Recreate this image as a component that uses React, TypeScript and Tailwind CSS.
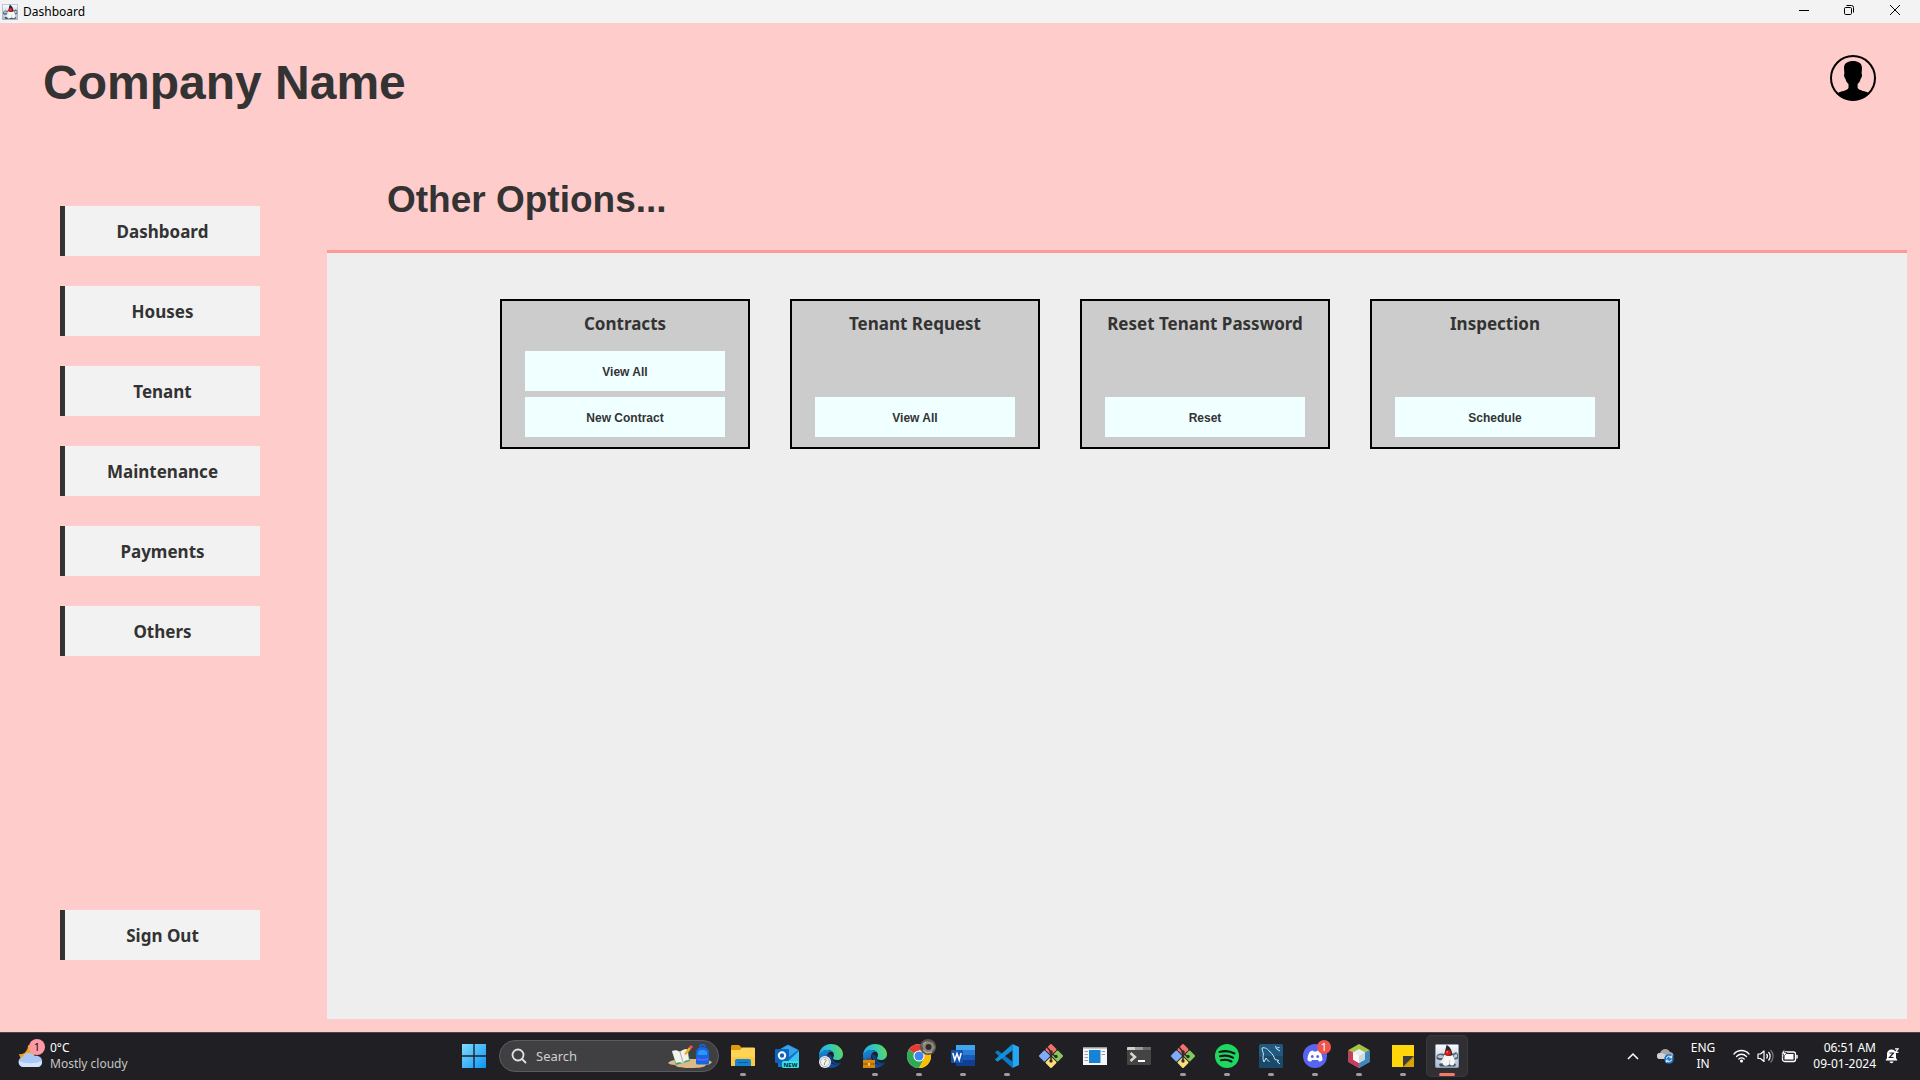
import React from "react";

const navItems = ["Dashboard", "Houses", "Tenant", "Maintenance", "Payments", "Others"];

const cards = [
  { title: "Contracts", actions: ["View All", "New Contract"] },
  { title: "Tenant Request", actions: ["View All"] },
  { title: "Reset Tenant Password", actions: ["Reset"] },
  { title: "Inspection", actions: ["Schedule"] },
];

function Duke({ className }: { className: string }) {
  return (
    <svg className={className} viewBox="0 0 24 24" aria-hidden="true">
      <defs>
        <linearGradient id="dukeSky" x1="0" y1="0" x2="0" y2="1">
          <stop offset="0" stopColor="#fbfcfe" />
          <stop offset="1" stopColor="#a9bad0" />
        </linearGradient>
      </defs>
      <rect x="0.5" y="0.5" width="23" height="23" rx="1" fill="url(#dukeSky)" stroke="#8ba0b8" />
      <path d="M1.500 12c2-3 6-3 9-1l-1 5c-3 1-6 0-8-1z" fill="#56616d" />
      <path d="M2.500 12c2-1.500 4-1.500 6 0l-1 2c-2 0-4 0-5-1z" fill="#b9c6d2" />
      <path d="M17 10l4-2 2 2v5l-5 1z" fill="#5f6b77" />
      <path d="M19 11l3-1v3l-3 1z" fill="#c3ced9" />
      <path d="M4 20c5-2 12-2 17 0l-1 2.500H5z" fill="#4c5660" />
      <path d="M11.500 1c3 1 5.500 5 6 10l-1 3h-6l-1.500-2c.5-4 2-8 2.500-11z" fill="#26262b" />
      <path d="M9.500 10.500c1 1.500 5.500 2 8 .5 2 3 3 7 1.500 9.500-1.500 1.500-3.500 1-4.500-.5-1.500 2-5 2.500-6.500.5C6.500 18 8 13 9.500 10.500z" fill="#f7f7f7" />
      <path d="M9 13l-4 5 1.500 1.500L10 16z" fill="#ececec" />
      <path d="M14.500 20c.3-2 .3-3 0-4" stroke="#b9bdc2" fill="none" />
      <circle cx="13" cy="8.800" r="2.900" fill="#e4161b" />
      <circle cx="12.200" cy="7.900" r="0.900" fill="#ff6d62" />
    </svg>
  );
}

function Avatar() {
  return (
    <svg className="size-[46px]" viewBox="0 0 46 46" aria-hidden="true">
      <defs>
        <clipPath id="avatarRing"><circle cx="23" cy="23" r="22.5" /></clipPath>
      </defs>
      <g clipPath="url(#avatarRing)">
        <path d="M14 13c0-5 4-7 9-7s9 2 9 7l-.4 5.500c1 1.500 0 4.500-1 5.500-.5 2-1.600 4-3 5v4c2 3 8 3 11 5l3 3-5 6H10l-5-6 3-3c3-2 9-2 10.500-5v-4c-1.500-1-2.500-3-3-5-1-1-2-4-1.100-5.500z" fill="#000" />
      </g>
      <circle cx="23" cy="23" r="22" fill="none" stroke="#000" strokeWidth="2" />
    </svg>
  );
}

function TitleBar() {
  return (
    <div className="flex h-[23px] shrink-0 items-center justify-between bg-[#f3f3f3]">
      <div className="flex items-center gap-[5px] pl-[2px]">
        <Duke className="size-4" />
        <span className="text-[12px] leading-4 text-black">Dashboard</span>
      </div>
      <div className="flex h-full pr-px pb-[3px]">
        <button aria-label="Minimize" className="flex w-[45px] items-center justify-center">
          <svg width="10" height="10" viewBox="0 0 10 10"><path d="M0 5.500h10" stroke="#000" /></svg>
        </button>
        <button aria-label="Restore" className="flex w-[45px] items-center justify-center">
          <svg width="10" height="10" viewBox="0 0 10 10" fill="none" stroke="#000">
            <rect x="0.5" y="2.500" width="7" height="7" rx="1.200" />
            <path d="M2.500 .5H7.500a2 2 0 0 1 2 2V7.500" />
          </svg>
        </button>
        <button aria-label="Close" className="flex w-12 items-center justify-center">
          <svg width="10" height="10" viewBox="0 0 10 10"><path d="M0 0l10 10M10 0L0 10" stroke="#000" /></svg>
        </button>
      </div>
    </div>
  );
}

function NavButton({ label }: { label: string }) {
  return (
    <button className="h-[50px] w-full border-l-[5px] border-[#333333] bg-[#f2f2f2] pt-[2px] text-center text-[17px] leading-6 font-bold text-[#333333]">
      {label}
    </button>
  );
}

function OptionCard({ title, actions }: { title: string; actions: string[] }) {
  return (
    <section className="flex h-[150px] w-[250px] flex-col justify-between border-2 border-black bg-[#cccccc] px-[23px] pt-[11px] pb-[10px]">
      <h2 className="text-center text-[17px] leading-6 font-bold whitespace-nowrap text-[#333333]">{title}</h2>
      <div className="flex flex-col gap-[6px]">
        {actions.map((a) => (
          <button key={a} className="h-10 w-full bg-[#f0ffff] pt-px font-['Liberation_Sans',sans-serif] text-[12px] font-bold text-[#333333]">
            {a}
          </button>
        ))}
      </div>
    </section>
  );
}

const icon = "size-6 overflow-visible";

function Edge({ id, children }: { id: string; children: React.ReactNode }) {
  return (
    <svg className={icon} viewBox="0 0 24 24">
      <defs>
        <linearGradient id={id + "a"} x1="0" y1="0.500" x2="1" y2="0.300">
          <stop offset="0" stopColor="#2ba9e6" />
          <stop offset="0.5" stopColor="#30c6c4" />
          <stop offset="1" stopColor="#62da50" />
        </linearGradient>
        <linearGradient id={id + "b"} x1="0" y1="0" x2="0.500" y2="1">
          <stop offset="0" stopColor="#1a8fdc" />
          <stop offset="1" stopColor="#0c4a9c" />
        </linearGradient>
      </defs>
      <path d="M0 12C0 5 5 0 12 0s12 5 12 10c0 4-3 6-6 6-3 0-4-1-4-2 0-.6 1-1 1-3 0-3-3-5-6.500-5C4 6 1 9 0 12z" fill={"url(#" + id + "a)"} />
      <path d="M0 12c1-4 4-6 8.500-6 2 0 4 1 5 2-3-1-5.500 1-5.500 5 0 5 4 7.500 8 7.500 3 0 5-1.500 6-2-2 3-5.500 5.500-10 5.500C5 24 0 19 0 12z" fill={"url(#" + id + "b)"} />
      <path d="M9.500 10c-1 4 1 9 6.500 10.500 3 .5 5.500-1 6.500-2-1 .2-2.500.8-4.500.3-3.500-1-5.500-4-4.500-6.800-1.500-.5-3-1.500-4-2z" fill="#123f7c" />
      {children}
    </svg>
  );
}

function Git() {
  return (
    <svg className={icon} viewBox="0 0 24 24">
      <g transform="rotate(45 12 12)">
        <rect x="3.200" y="3.200" width="8.300" height="8.300" rx="1" fill="#f3706d" />
        <rect x="12.500" y="3.200" width="8.300" height="8.300" rx="1" fill="#86c95a" />
        <rect x="3.200" y="12.500" width="8.300" height="8.300" rx="1" fill="#7fabf8" />
        <rect x="12.500" y="12.500" width="8.300" height="8.300" rx="1" fill="#fbe07a" />
      </g>
      <path d="M8 3l4 5v9M12 9l5 4" stroke="#332b2b" strokeWidth="1.500" fill="none" />
      <circle cx="12" cy="8" r="1.700" fill="#332b2b" />
      <circle cx="12" cy="17" r="1.700" fill="#332b2b" />
      <circle cx="17" cy="12.500" r="1.700" fill="#332b2b" />
    </svg>
  );
}

const apps: { name: string; open?: boolean; active?: boolean; art: React.ReactNode }[] = [
  {
    name: "File Explorer", open: true,
    art: (
      <svg className={icon} viewBox="0 0 24 24">
        <path d="M0 2.500C0 1.700.5 1 1.500 1H8l2.500 2.500V8H0z" fill="#e09b0c" />
        <path d="M0 6h9l2-2.500h11.500c1 0 1.500.5 1.500 1.500v17H0z" fill="#ffd354" />
        <path d="M0 13h24v9H0z" fill="#fbc02f" opacity="0.5" />
        <path d="M4 22v-5c0-1.500 1-2 2-2h12c1.200 0 2 .7 2 2v5z" fill="#1584cf" />
        <path d="M7 18.500h10" stroke="#0b5c9b" />
      </svg>
    ),
  },
  {
    name: "Outlook",
    art: (
      <svg className={icon} viewBox="0 0 24 24">
        <path d="M3 6l10-5.500L24 6v17H3z" fill="#1173c8" />
        <path d="M4 6l9-5 10 5-9 7z" fill="#39a3e6" />
        <path d="M24 7v14H9z" fill="#39c3f1" />
        <rect y="5" width="14" height="14" rx="1" fill="#0d66bd" />
        <circle cx="7" cy="11.500" r="3.200" fill="none" stroke="#fff" strokeWidth="2" />
        <rect x="7" y="17" width="17" height="7" rx="1.500" fill="#35e0e8" />
        <text x="15.500" y="22.800" fontSize="6" fontWeight="700" textAnchor="middle" fill="#06282e">NEW</text>
      </svg>
    ),
  },
  {
    name: "Edge",
    art: (
      <Edge id="edgeOne">
        <circle cx="6" cy="18" r="6" fill="#f1f1f1" />
        <circle cx="6" cy="18" r="4.500" fill="none" stroke="#b5b5b5" />
        <path d="M5 16c1-1.500 3-.5 2 1l-1.500 2v2" fill="none" stroke="#9a9a9a" />
      </Edge>
    ),
  },
  {
    name: "Edge Work", open: true,
    art: (
      <Edge id="edgeTwo">
        <path d="M4 16v-1.500h4V16" fill="none" stroke="#7a4305" />
        <rect y="16" width="12" height="8" fill="#d9860f" />
        <path d="M0 20h12" stroke="#8f5206" />
        <rect x="5" y="19" width="2" height="2.500" fill="#ffd071" />
      </Edge>
    ),
  },
  {
    name: "Chrome", open: true,
    art: (
      <svg className={icon} viewBox="0 0 24 24">
        <circle cx="12" cy="12" r="12" fill="#fff" />
        <path d="M12 12L1.600 6A12 12 0 0 1 22.400 6z" fill="#e33b2e" />
        <path d="M12 12L1.600 6A12 12 0 0 0 12 24l5-9z" fill="#2da94f" />
        <path d="M12 12l5 3-5 9A12 12 0 0 0 22.400 6H12z" fill="#fdbd00" />
        <circle cx="12" cy="12" r="5.600" fill="#fff" />
        <circle cx="12" cy="12" r="4.500" fill="#4184f3" />
        <circle cx="21" cy="3" r="8" fill="#5d5750" />
        <path d="M15 1l5-4 6 2 2 5-4 5-6 0z" fill="#8d867d" />
        <circle cx="21.500" cy="3" r="3" fill="#2e2c2b" />
        <path d="M16 6l4 3 5-1M16 0l3-2" stroke="#c4bdb2" fill="none" />
      </svg>
    ),
  },
  {
    name: "Word", open: true,
    art: (
      <svg className={icon} viewBox="0 0 24 24">
        <rect x="5" y="1" width="19" height="6" fill="#41a5ee" />
        <rect x="5" y="6" width="19" height="6" fill="#2b7cd3" />
        <rect x="5" y="11" width="19" height="6" fill="#185abd" />
        <rect x="5" y="16" width="19" height="6" fill="#103f91" />
        <rect y="6" width="12" height="13" rx="1" fill="#1553ae" />
        <path d="M1.800 9l2 7 2.200-6.500L8.200 16l2-7" fill="none" stroke="#fff" strokeWidth="1.500" />
      </svg>
    ),
  },
  {
    name: "Visual Studio Code", open: true,
    art: (
      <svg className={icon} viewBox="0 0 24 24">
        <path d="M17.500 0L24 3v18l-6.500 3z" fill="#28a6f0" />
        <path d="M17.500 24L0 8.500 2.500 6.300 18 18z" fill="#0a7bc6" />
        <path d="M17.500 0L0 15.500l2.500 2.200L18 6z" fill="#1390dc" />
      </svg>
    ),
  },
  { name: "Git Bash", art: <Git /> },
  {
    name: "Preview",
    art: (
      <svg className={icon} viewBox="0 0 24 24">
        <rect y="3" width="24" height="18" fill="#f6f6f6" />
        <rect y="3" width="24" height="1.500" fill="#9a9a9a" />
        <rect x="6" y="6" width="11.500" height="13" fill="#1683d8" />
        <path d="M1.500 7.500H5M1.500 10.500H5M1.500 13.500H5M1.500 16.500H5M18.500 7.500H22M18.500 10.500H22" stroke="#9c9c9c" />
      </svg>
    ),
  },
  {
    name: "Command Prompt",
    art: (
      <svg className={icon} viewBox="0 0 24 24">
        <rect y="3" width="24" height="18" rx="1" fill="#444" />
        <path d="M0 6V4q0-1 1-1h7v3z" fill="#d0d0d0" />
        <rect x="8" y="3" width="8" height="3" fill="#9b9b9b" />
        <rect x="16" y="3" width="8" height="3" fill="#686868" />
        <path d="M3.500 9l4.500 4-4.500 4" fill="none" stroke="#d5d5d5" strokeWidth="2.500" />
        <path d="M11 17h7" stroke="#fff" strokeWidth="2" />
      </svg>
    ),
  },
  { name: "Git GUI", open: true, art: <Git /> },
  {
    name: "Spotify", open: true,
    art: (
      <svg className={icon} viewBox="0 0 24 24">
        <circle cx="12" cy="12" r="12" fill="#1ed760" />
        <path d="M4.500 8c5-1.400 10.500-1 15 1.500M5 12.300c4.500-1.200 9-.8 13 1.400M6 16.300c3.500-1 7.500-.6 10.500 1.200" fill="none" stroke="#14161a" strokeWidth="2.100" strokeLinecap="round" />
      </svg>
    ),
  },
  {
    name: "MySQL Workbench", open: true,
    art: (
      <svg className={icon} viewBox="0 0 24 24">
        <rect width="24" height="24" rx="2" fill="#205a80" />
        <rect y="12" width="24" height="12" rx="2" fill="#194a6c" />
        <path d="M5 18c-1.500-3-1-6-.5-8C4 8 3 6 3 4c3-1 6 1 8 4 3 2 4 5 5 7.500l4 1-2 1 3 2.500M5 18l2-4c1 1 1.500 3 3.500 3.500M16.500 2l1 3 3.500 2M17.500 4l3-.5" fill="none" stroke="#d3e4ee" strokeWidth="1" />
      </svg>
    ),
  },
  {
    name: "Discord", open: true,
    art: (
      <svg className={icon} viewBox="0 0 24 24">
        <circle cx="12" cy="12" r="12" fill="#5865f2" />
        <path d="M8 7l2-.5.5 1h3l.5-1 2 .5c2 1 3.500 5 3.500 9-1 1-2.500 1.500-3.500 1.500l-1-1.500H9l-1 1.500c-1 0-2.500-.5-3.500-1.500 0-4 1.500-8 3.500-9z" fill="#fff" />
        <ellipse cx="9.300" cy="12.500" rx="1.400" ry="1.600" fill="#5865f2" />
        <ellipse cx="14.700" cy="12.500" rx="1.400" ry="1.600" fill="#5865f2" />
        <circle cx="21" cy="3" r="7" fill="#f0544f" />
        <text x="21" y="7" fontSize="11" textAnchor="middle" fill="#fff">1</text>
      </svg>
    ),
  },
  {
    name: "NetBeans", open: true,
    art: (
      <svg className={icon} viewBox="0 0 24 24">
        <path d="M12 0l10.500 6v12L12 24 1.500 18V6z" fill="#a5c346" />
        <path d="M1.500 6L12 12v12L1.500 18z" fill="#cf3861" />
        <path d="M22.500 6L12 12v12l10.500-6z" fill="#3b87c8" />
        <path d="M12 5l6 3.500v7L12 19l-6-3.500v-7z" fill="#e8efef" />
        <path d="M12 12v7l-6-3.500v-7z" fill="#f9fbfa" />
        <path d="M12 12v7l6-3.500v-7z" fill="#cddad9" />
      </svg>
    ),
  },
  {
    name: "Sticky Notes", open: true,
    art: (
      <svg className={icon} viewBox="0 0 24 24">
        <path d="M1 1h22v12L13 23H1z" fill="#ffd60a" />
        <path d="M12 12h11L12 23z" fill="#3c3c3c" />
        <path d="M23 13v10H12.500z" fill="#d9a300" />
      </svg>
    ),
  },
  { name: "Java", open: true, active: true, art: <Duke className="size-6" /> },
];

function Weather() {
  return (
    <svg className="h-[30px] w-7 overflow-visible" viewBox="0 0 28 30">
      <path d="M10 4a8 8 0 1 1-9 9c5 1 9-3 9-9z" fill="#f5a21d" />
      <path d="M6 26a5 5 0 0 1-1-10c1-5 9-6 11-1 4-1 9 1 8 7-.5 3-3 4-5 4z" fill="#a9c7f5" />
      <path d="M5 26a5 5 0 0 1-4-6c6 3 16 3 23 0 0 4-2 6-5 6z" fill="#d4e3fb" />
      <circle cx="19" cy="6" r="8" fill="#ff99a4" />
      <text x="19" y="10" fontSize="11" textAnchor="middle" fill="#111">1</text>
    </svg>
  );
}

function Taskbar() {
  return (
    <footer className="grid h-12 shrink-0 grid-cols-[1fr_auto_1fr] border-t border-[#48464a] bg-[#202024] pb-[2px] text-[12px] leading-4 text-white">
      <button className="flex items-center gap-1 justify-self-start pl-[18px] text-left">
        <Weather />
        <span>
          <span className="block">0°C</span>
          <span className="block text-[#c6c6c6]">Mostly cloudy</span>
        </span>
      </button>

      <div className="flex items-center pl-[11px]">
        <button aria-label="Start" className="mr-[13px]">
          <svg className="size-6" viewBox="0 0 24 24">
            <defs>
              <linearGradient id="startBlue" x1="0" y1="0" x2="1" y2="1">
                <stop offset="0" stopColor="#7fdcff" />
                <stop offset="1" stopColor="#0b93f5" />
              </linearGradient>
            </defs>
            <path d="M0 0h11.300v11.300H0zM12.700 0H24v11.300H12.700zM0 12.700h11.300V24H0zM12.700 12.700H24V24H12.700z" fill="url(#startBlue)" />
          </svg>
        </button>
        <label className="mr-[2px] flex h-8 w-[220px] items-center rounded-full border border-[#5c5c60] bg-[#404043] pr-[5px] pl-[11px]">
          <svg className="size-4 shrink-0" viewBox="0 0 16 16" fill="none" stroke="#e2e2e2" strokeWidth="1.800" strokeLinecap="round">
            <circle cx="7" cy="7" r="5.500" />
            <path d="M11 11l3.500 3.500" />
          </svg>
          <input type="text" aria-label="Search" placeholder="Search" className="ml-[9px] w-full min-w-0 bg-transparent text-[13px] leading-5 outline-none placeholder:text-[#cfcfcf]" />
          <svg className="h-6 w-[46px] shrink-0" viewBox="0 0 46 24">
            <path d="M1 19c3-3 9-4 14-4h18c5 0 9 1 12 3-1 2-4 3-6 3-1 3-12 3-16 3s-13 0-15-3c-3 0-6-1-7-2z" fill="#dcb98a" />
            <path d="M5 8l16-2 2 11-14 4z" fill="#43a164" />
            <path d="M5 7c3-1 5-1 8 1 2-2 4-3 7-3l2 11c-3 0-5 1-6 3-2-1-5-1-7 0z" fill="#f2f2ee" />
            <path d="M13 8l3 10" stroke="#a9a9a0" />
            <path d="M17 10l5-7 2 2-5 6z" fill="#f8a822" />
            <path d="M22 3l2-2 2 2-2 2z" fill="#f1504f" />
            <path d="M29 19V9c0-4 3-6 6.500-6S42 5 42 9v10c0 1-1 1.500-2 1.500h-9c-1 0-2-.5-2-1.500z" fill="#1268e0" />
            <path d="M33 3c0-3 5-3 5 0" stroke="#1268e0" strokeWidth="1.500" fill="none" />
            <path d="M31 8c2-3 7-3 9 0v3h-9z" fill="#2f94f7" />
            <path d="M30 15c3 1 8 1 11 0" stroke="#7c5cf7" strokeWidth="1.500" fill="none" />
          </svg>
        </label>
        {apps.map((app) => (
          <button key={app.name} aria-label={app.name} className="flex h-full w-11 items-center justify-center">
            <span className={app.active ? "relative flex h-10 w-10 items-center justify-center rounded-sm bg-[#302f33] ring-1 ring-[#3a393d]" : "relative flex h-10 w-10 items-center justify-center"}>
              {app.art}
              {app.open && (
                <span className={app.active ? "absolute bottom-0 left-3 h-[3px] w-4 rounded-full bg-[#f27d63]" : "absolute bottom-0 left-[17px] h-[3px] w-[6px] rounded-full bg-[#9d9d9f]"} />
              )}
            </span>
          </button>
        ))}
      </div>

      <div className="flex items-center justify-self-end pr-[21px]">
        <button aria-label="Show hidden icons" className="mr-[18px]">
          <svg className="block" width="12" height="8" viewBox="0 0 12 8"><path d="M1 7l5-5 5 5" fill="none" stroke="#fff" strokeWidth="1.500" /></svg>
        </button>
        <button aria-label="OneDrive" className="mr-[17px]">
          <svg className="block" width="17" height="16" viewBox="0 0 17 16">
            <path d="M3 11a3 3 0 0 1 0-6c2-5 8-5 10-1 3 0 4 3 3 5l-2 2z" fill="#a6a6a6" />
            <path d="M3 11a3 3 0 0 1 0-6c3 0 6 1 7 4l-1 2z" fill="#d2d2d2" />
            <circle cx="12" cy="11" r="4.800" fill="#1a73c9" />
            <path d="M9.500 10.500a2.700 2.700 0 0 1 5-1M14.500 11.500a2.700 2.700 0 0 1-5 1M14.700 7.500v2.300h-2.300M9.300 14.500v-2.300h2.300" fill="none" stroke="#fff" />
          </svg>
        </button>
        <button className="mr-[18px] text-center"><span className="block">ENG</span><span className="block">IN</span></button>
        <button aria-label="Network, sound and battery" className="mr-[15px] flex items-center gap-[7px]">
          <svg width="17" height="14" viewBox="0 0 17 14" fill="none" stroke="#fff" strokeWidth="1.300" strokeLinecap="round">
            <path d="M1 5c4-4.700 11-4.700 15 0M3.500 7.500c3-3 7-3 10 0M5.800 10c1.700-1.500 3.700-1.500 5.400 0" />
            <circle cx="8.500" cy="12" r="0.900" fill="#fff" />
          </svg>
          <svg width="17" height="14" viewBox="0 0 17 14" fill="none" stroke="#fff" strokeWidth="1.200" strokeLinejoin="round">
            <path d="M1 5h2.500L7 2v10.500L3.500 9.500H1zM9.500 5c1 1.200 1 3.300 0 4.500M11.500 3c2.200 2.300 2.200 6.200 0 8.500" />
            <path d="M13.500 1c3.500 3.500 3.500 9 0 12.500" stroke="#77777a" />
          </svg>
          <svg width="17" height="14" viewBox="0 0 17 14" fill="none" stroke="#fff">
            <rect x="1.500" y="3" width="13" height="9.500" rx="2" strokeWidth="1.300" />
            <rect x="3.500" y="5" width="9" height="5.500" fill="#fff" stroke="none" />
            <path d="M16 6v3.500" strokeWidth="1.500" />
            <path d="M3.500 0L0 5h2.500L2 8.500 6 3.500H3.500z" fill="#fff" stroke="#202024" strokeWidth="0.600" />
          </svg>
        </button>
        <button className="mr-[9px] text-right"><span className="block">06:51 AM</span><span className="block">09-01-2024</span></button>
        <button aria-label="Notifications">
          <svg className="block" width="14" height="16" viewBox="0 0 14 16">
            <path d="M2 10V6c0-3 2-4.500 4.500-4.500S11 3 11 6v4l1.500 2.500H.5zM4.500 13.500h4c-.5 2.200-3.500 2.200-4 0z" fill="#fff" />
            <path d="M4.500 5h4l-4 4.500h4" fill="none" stroke="#202024" strokeWidth="1.200" />
            <path d="M10 .8h3.200L10.300 4.300h3.200" fill="none" stroke="#fff" strokeWidth="1.200" />
          </svg>
        </button>
      </div>
    </footer>
  );
}

export default function App() {
  return (
    <div className="flex min-h-screen flex-col bg-[#ffcccc] font-['Noto_Sans',sans-serif]">
      <TitleBar />
      <header className="flex items-start justify-between pt-8 pr-11 pl-[43px]">
        <h1 className="font-['Liberation_Sans',sans-serif] text-[48px] leading-[56px] font-bold text-[#333333]">Company Name</h1>
        <button aria-label="Profile">
          <Avatar />
        </button>
      </header>
      <div className="flex grow pt-[59px] pr-[13px] pb-[13px]">
        <aside className="mt-9 mr-[67px] mb-[59px] ml-[60px] flex w-[200px] shrink-0 flex-col justify-between">
          <nav className="flex flex-col gap-[30px]">
            {navItems.map((n) => (
              <NavButton key={n} label={n} />
            ))}
          </nav>
          <NavButton label="Sign Out" />
        </aside>
        <div className="flex grow flex-col">
          <h2 className="h-20 pt-2 pl-[60px] font-['Liberation_Sans',sans-serif] text-[37px] leading-[44px] font-bold text-[#333333]">Other Options...</h2>
          <main className="grow border-t-[3px] border-[#ff9999] bg-[#eeeeee] pt-[46px] pl-[173px]">
            <div className="flex flex-wrap gap-10">
              {cards.map((c) => (
                <OptionCard key={c.title} {...c} />
              ))}
            </div>
          </main>
        </div>
      </div>
      <Taskbar />
    </div>
  );
}
